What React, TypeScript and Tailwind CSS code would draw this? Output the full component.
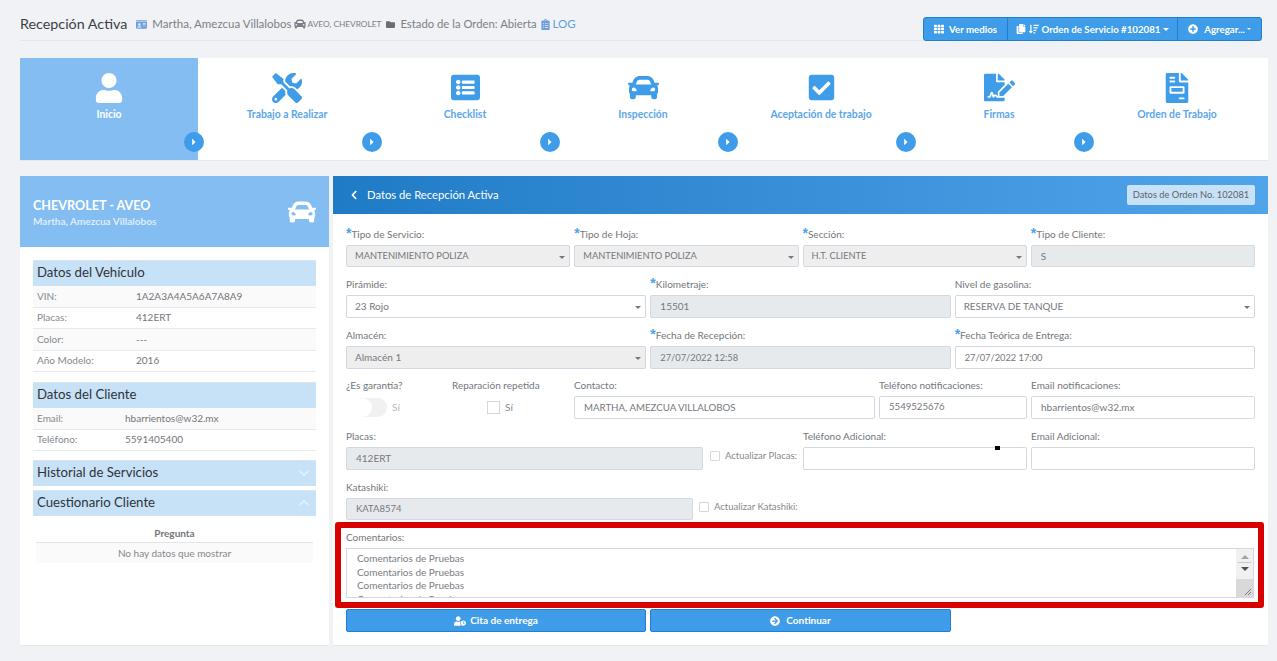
import React from "react";
import {
  FaUser, FaTools, FaListAlt, FaCar, FaCheckSquare, FaFileSignature, FaFileInvoice, FaIdCard, FaFolder,
  FaClipboardList, FaTh, FaCopy, FaSortAmountDown, FaPlusCircle, FaChevronLeft, FaUserClock, FaArrowCircleRight, FaCaretRight,
} from "react-icons/fa";
import { FiChevronDown, FiChevronUp } from "react-icons/fi";

const steps = [
  { label: "Inicio", Icon: FaUser, size: 30 },
  { label: "Trabajo a Realizar", Icon: FaTools, size: 30 },
  { label: "Checklist", Icon: FaListAlt, size: 29 },
  { label: "Inspección", Icon: FaCar, size: 31 },
  { label: "Aceptación de trabajo", Icon: FaCheckSquare, size: 29 },
  { label: "Firmas", Icon: FaFileSignature, size: 31 },
  { label: "Orden de Trabajo", Icon: FaFileInvoice, size: 30 },
];

function Label({ req, text }: { req?: boolean; text: string }) {
  return (
    <div className="h-[17px] text-[10px] leading-[13px] text-[#73767b] whitespace-nowrap">
      {req && <span className="font-['Liberation_Sans'] text-[#4aa3ec] text-[14px] font-bold leading-[10px]">*</span>}
      {text}
    </div>
  );
}

function Field({ req, label, value = "", disabled, select, h = "h-[23px]", vc = "text-[10px]", className = "" }: { req?: boolean; label: string; value?: string; disabled?: boolean; select?: boolean; h?: string; vc?: string; className?: string }) {
  const bg = select && disabled ? "bg-[#eeeeee]" : disabled ? "bg-[#e7eaed]" : "bg-white";
  return (
    <div className={className}>
      <Label req={req} text={label} />
      <div className={`relative border border-[#d3d9e3] rounded-[2px] flex items-center text-[#75787d] whitespace-nowrap ${select ? "pl-[8px]" : "pl-[9px]"} ${h} ${vc} ${bg}`}>
        {value}
        {select && <span className="absolute right-[4px] top-[10px] w-0 h-0 border-x-[3px] border-x-transparent border-t-[3px] border-t-[#777]" />}
      </div>
    </div>
  );
}

function SectionHead({ text, chevron }: { text: string; chevron?: "up" | "down" }) {
  return (
    <div className="h-[26px] bg-[#c7e1f7] border-t border-[#d9e6f1] flex items-center justify-between pl-[4px] pr-[4px] pb-[2px] text-[13.2px] text-[#2f3338]">
      <span>{text}</span>
      {chevron === "down" && <FiChevronDown className="text-[#e8f2fb] text-[16px]" />}
      {chevron === "up" && <FiChevronUp className="text-[#e8f2fb] text-[16px]" />}
    </div>
  );
}

function InfoRow({ k, v, shade, col }: { k: string; v: string; shade?: boolean; col: string }) {
  return (
    <div className={`h-[21.5px] flex items-center pl-[4px] border-b border-[#e8e9ef] text-[10px] text-[#85888c] ${shade ? "bg-[#fafafa]" : "bg-white"}`}>
      <span className={col}>{k}</span>
      <span className="text-[#73767b]">{v}</span>
    </div>
  );
}

function Check({ label, className = "" }: { label: string; className?: string }) {
  return (
    <div className={`flex items-center gap-[5px] text-[9.5px] text-[#85888c] whitespace-nowrap ${className}`}>
      <span className="w-[10px] h-[10px] border border-[#d6d6d6] bg-white rounded-[1px]" />
      {label}
    </div>
  );
}

export default function App() {
  return (
    <div className="w-[1277px] h-[661px] overflow-hidden bg-[#f0f2f6] font-['Lato','Liberation_Sans',sans-serif]">
      <div className="ml-[20px] w-[1242px] h-[41px] border-b border-[#e4e6ea] relative flex items-center pt-[8px] whitespace-nowrap">
        <span className="text-[14.3px] text-[#3b3f44]">Recepción Activa</span>
        <span className="ml-[9px] flex items-center text-[11.5px] text-[#7c7f85]">
          <FaIdCard className="text-[#6c9fdc] text-[11px]" />
          <span className="ml-[5px]">Martha, Amezcua Villalobos</span>
          <FaCar className="ml-[2px] text-[#7c7f85] text-[12px]" />
          <span className="ml-[2px] text-[8.3px]">AVEO, CHEVROLET</span>
          <FaFolder className="ml-[5px] text-[#6a6d72] text-[9px]" />
          <span className="ml-[5px] text-[11.3px]">Estado de la Orden: Abierta</span>
          <FaClipboardList className="ml-[3px] text-[#6c9fdc] text-[11px]" />
          <span className="ml-[2px] text-[#5b9fe2]">LOG</span>
        </span>
        <div className="absolute right-0 top-[17px] w-[339px] flex h-[24px] rounded-[3px] border border-[#1f7fd6] bg-[#3e9ce8] text-white text-[9.7px] font-bold">
          <div className="w-[84px] flex items-center justify-center gap-[5px] border-r border-[#1f7fd6]">
            <FaTh className="text-[10px]" />
            <span>Ver medios</span>
          </div>
          <div className="w-[170px] flex items-center justify-center gap-[3px] border-r border-[#1f7fd6]">
            <FaCopy className="text-[10px]" />
            <FaSortAmountDown className="text-[10px]" />
            <span>Orden de Servicio #102081</span>
            <span className="w-0 h-0 border-x-[3px] border-x-transparent border-t-[3px] border-t-white" />
          </div>
          <div className="flex-1 flex items-center justify-center gap-[6px]">
            <FaPlusCircle className="text-[10px]" />
            <span>Agregar...</span>
            <span className="ml-[-4px] w-0 h-0 border-x-[2px] border-x-transparent border-t-[2px] border-t-white" />
          </div>
        </div>
      </div>

      <div className="ml-[20px] mt-[17px] w-[1248px] h-[103px] bg-white border-b border-[#e6e8ed] grid grid-cols-[repeat(7,178px)]">
        {steps.map(({ label, Icon, size }, i) => (
          <div key={label} className={`relative flex flex-col items-center ${i === 0 ? "bg-[#83bdf2] text-white" : "text-[#3e9ce8]"}`}>
            <div className="h-[31px] mt-[14px] flex items-center justify-center">
              <Icon style={{ fontSize: size }} />
            </div>
            <div className={`mt-[4px] text-[10.4px] font-bold leading-[14px] ${i === 0 ? "text-white" : "text-[#5ba6ea]"}`}>{label}</div>
            {i < 6 && (
              <div className="absolute right-[-6px] top-[74px] w-[20px] h-[20px] rounded-full bg-[#3e9ce8] flex items-center justify-center text-white z-10">
                <FaCaretRight className="text-[10px]" />
              </div>
            )}
          </div>
        ))}
      </div>

      <div className="ml-[20px] mt-[15px] flex gap-[4px] h-[470px]">
        <div className="w-[309px] bg-white border-b border-[#e6e8ed]">
          <div className="h-[71px] bg-[#83bdf2] flex items-center justify-between px-[13px] text-white">
            <div className="pt-[3px]">
              <div className="text-[12.6px] font-bold leading-[16px]">CHEVROLET - AVEO</div>
              <div className="text-[10px] font-bold leading-[14px] text-[#dcecfb]">Martha, Amezcua Villalobos</div>
            </div>
            <FaCar className="text-[28px]" />
          </div>
          <div className="px-[13px] pt-[13px]">
            <SectionHead text="Datos del Vehículo" />
            <InfoRow shade k="VIN:" v="1A2A3A4A5A6A7A8A9" col="w-[99px]" />
            <InfoRow k="Placas:" v="412ERT" col="w-[99px]" />
            <InfoRow shade k="Color:" v="---" col="w-[99px]" />
            <InfoRow k="Año Modelo:" v="2016" col="w-[99px]" />
            <div className="h-[10px]" />
            <SectionHead text="Datos del Cliente" />
            <InfoRow shade k="Email:" v="hbarrientos@w32.mx" col="w-[88px]" />
            <InfoRow k="Teléfono:" v="5591405400" col="w-[88px]" />
            <div className="h-[9px]" />
            <SectionHead text="Historial de Servicios" chevron="down" />
            <div className="h-[4px]" />
            <SectionHead text="Cuestionario Cliente" chevron="up" />
            <div className="mx-[3px] mt-[9px] text-[10px] text-[#85888c] text-center">
              <div className="h-[18px] font-bold text-[#73767b] border-b border-[#e3e5ea] leading-[16px]">Pregunta</div>
              <div className="h-[20px] bg-[#fafafa] leading-[20px]">No hay datos que mostrar</div>
            </div>
          </div>
        </div>

        <div className="w-[935px] bg-white border-b border-[#e6e8ed]">
          <div className="h-[38px] bg-gradient-to-r from-[#1f7bc6] to-[#50a4ea] flex items-center justify-between pl-[16px] pr-[13px] text-white">
            <div className="flex items-center gap-[8px] text-[11.25px]">
              <FaChevronLeft className="text-[10px]" />
              <span>Datos de Recepción Activa</span>
            </div>
            <div className="w-[128px] h-[20px] bg-[#c7e1f7] rounded-[2px] text-[9.3px] text-[#5d6167] flex items-center justify-center">Datos de Orden No. 102081</div>
          </div>

          <div className="px-[13px] pt-[14px]">
            <div className="grid grid-cols-4 gap-x-[4px]">
              <Field req label="Tipo de Servicio:" value="MANTENIMIENTO POLIZA" disabled select h="h-[22px]" vc="text-[9.3px]" />
              <Field req label="Tipo de Hoja:" value="MANTENIMIENTO POLIZA" disabled select h="h-[22px]" vc="text-[9.3px]" />
              <Field req label="Sección:" value="H.T. CLIENTE" disabled select h="h-[22px]" vc="text-[9.3px]" />
              <Field req label="Tipo de Cliente:" value="S" disabled h="h-[22px]" />
            </div>
            <div className="grid grid-cols-3 gap-x-[4px] mt-[11px]">
              <Field label="Pirámide:" value="23 Rojo" select />
              <Field req label="Kilometraje:" value="15501" disabled />
              <Field label="Nivel de gasolina:" value="RESERVA DE TANQUE" select vc="text-[9.9px]" />
            </div>
            <div className="grid grid-cols-3 gap-x-[4px] mt-[11px]">
              <Field label="Almacén:" value="Almacén 1" disabled select />
              <Field req label="Fecha de Recepción:" value="27/07/2022 12:58" disabled vc="text-[9.3px]" />
              <Field req label="Fecha Teórica de Entrega:" value="27/07/2022 17:00" vc="text-[9.3px]" />
            </div>
            <div className="flex gap-x-[4px] mt-[10px]">
              <div className="w-[102px]">
                <Label text="¿Es garantía?" />
                <div className="h-[23px] flex items-center pl-[7px] gap-[5px] text-[10px] text-[#b5b7ba]">
                  <span className="w-[34px] h-[19px] rounded-full bg-[#f1f1f1] relative">
                    <span className="absolute left-0 top-0 w-[19px] h-[19px] rounded-full bg-white" />
                  </span>
                  Sí
                </div>
              </div>
              <div className="w-[118px]">
                <Label text="Reparación repetida" />
                <div className="h-[23px] flex items-center pl-[35px] gap-[5px] text-[10px] text-[#85888c]">
                  <span className="w-[13px] h-[13px] border border-[#d6d6d6] bg-white" />
                  Sí
                </div>
              </div>
              <Field className="w-[301px]" label="Contacto:" value="MARTHA, AMEZCUA VILLALOBOS" vc="text-[9.7px]" />
              <Field className="w-[148px]" label="Teléfono notificaciones:" value="5549525676" vc="text-[9.6px]" />
              <Field className="flex-1" label="Email notificaciones:" value="hbarrientos@w32.mx" />
            </div>
            <div className="flex gap-x-[4px] mt-[11px]">
              <Field className="w-[357px]" label="Placas:" value="412ERT" disabled />
              <Check className="w-[89px] ml-[3px] pt-[12px]" label="Actualizar Placas:" />
              <div className="relative w-[224px]">
                <Field label="Teléfono Adicional:" />
                <span className="absolute left-[192px] top-[16px] w-[5px] h-[4px] bg-black" />
              </div>
              <Field className="flex-1" label="Email Adicional:" />
            </div>
            <div className="flex gap-x-[4px] mt-[11px]">
              <Field className="w-[347px]" label="Katashiki:" value="KATA8574" disabled h="h-[22px]" vc="text-[9.5px]" />
              <Check className="ml-[2px] pt-[13px]" label="Actualizar Katashiki:" />
            </div>
          </div>

          <div className="ml-[2px] mt-[2px] w-[929px] h-[86px] border-[6px] border-[#d90000] rounded-[3px] pl-[5px] pr-[4px] pt-[3px]">
            <Label text="Comentarios:" />
            <div className="relative h-[50px] border border-[#d3d9e3] overflow-hidden pl-[10px] pt-[3px] text-[10px] leading-[13.5px] text-[#7a7d82]">
              <div>Comentarios de Pruebas</div>
              <div>Comentarios de Pruebas</div>
              <div>Comentarios de Pruebas</div>
              <div>Comentarios de Pruebas</div>
              <div className="absolute right-0 top-0 bottom-0 w-[17px] bg-[#f0f0f0] flex flex-col items-center">
                <span className="mt-[6px] w-0 h-0 border-x-[4px] border-x-transparent border-b-[4px] border-b-[#a3a3a3]" />
                <span className="mt-[3px] w-[13px] h-px bg-[#c8c8c8]" />
                <span className="mt-[4px] w-0 h-0 border-x-[4px] border-x-transparent border-t-[4px] border-t-[#505050]" />
                <span className="absolute bottom-0 left-0 right-0 h-[18px] bg-[#d9d9d9]">
                  <svg viewBox="0 0 17 18" className="w-full h-full">
                    <path d="M9 16 L15 10 M12 16 L15 13" stroke="#666" strokeWidth="0.8" fill="none" />
                  </svg>
                </span>
              </div>
            </div>
          </div>

          <div className="ml-[13px] mt-[1px] flex gap-x-[4px] text-[10px] font-bold text-white">
            <div className="w-[300px] h-[23px] bg-[#3e9ce8] border border-[#1f7fd6] rounded-[2px] flex items-center justify-center gap-[4px]">
              <FaUserClock className="text-[12px]" />
              <span>Cita de entrega</span>
            </div>
            <div className="w-[301px] h-[23px] bg-[#3e9ce8] border border-[#1f7fd6] rounded-[2px] flex items-center justify-center gap-[6px]">
              <FaArrowCircleRight className="text-[10px]" />
              <span>Continuar</span>
            </div>
          </div>
        </div>
      </div>
    </div>
  );
}
